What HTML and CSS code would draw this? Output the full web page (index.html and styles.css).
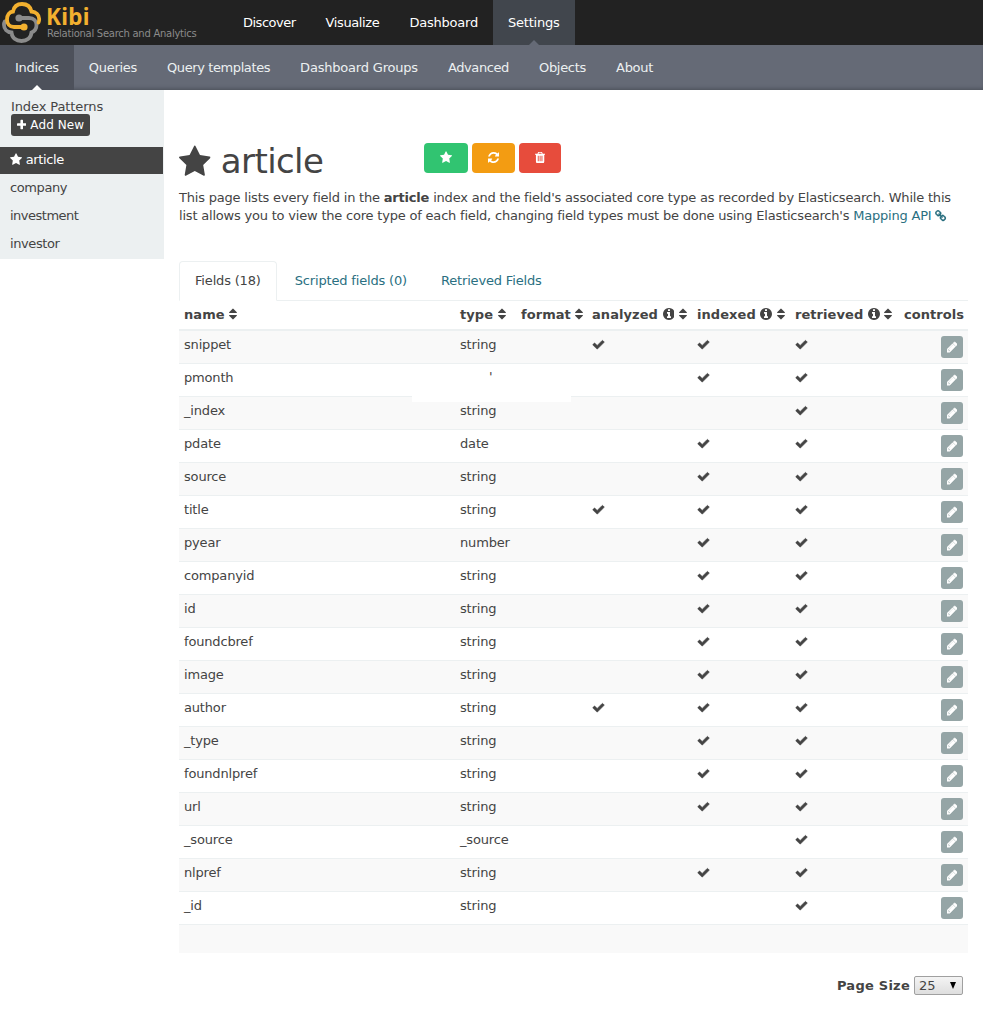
FILE: index.html
```html
<!DOCTYPE html>
<html lang="en">
<head>
<meta charset="utf-8">
<title>Kibi - Settings</title>
<link rel="stylesheet" href="styles.css">
</head>
<body>
<svg class="sprite" aria-hidden="true">
  <symbol id="star" viewBox="64 0 1664 1792"><path d="M1728 647q0 22-26 48l-363 354 86 500q1 7 1 20 0 21-10.5 35.5t-30.5 14.5q-19 0-40-12l-449-236-449 236q-22 12-40 12-21 0-31.5-14.5t-10.5-35.5q0-6 2-20l86-500-364-354q-25-27-25-48 0-37 56-46l502-73 225-455q19-41 49-41t49 41l225 455 502 73q56 9 56 46z"/></symbol>
  <symbol id="refresh" viewBox="128 0 1536 1792"><path d="M1639 1056q0 5-1 7-64 268-268 434.5t-478 166.5q-146 0-282.5-55t-243.5-157l-129 129q-19 19-45 19t-45-19-19-45v-448q0-26 19-45t45-19h448q26 0 45 19t19 45-19 45l-137 137q71 66 161 102t187 36q134 0 250-65t186-179q11-17 53-117 8-23 30-23h192q13 0 22.5 9.5t9.5 22.5zm25-800v448q0 26-19 45t-45 19h-448q-26 0-45-19t-19-45 19-45l138-138q-148-137-349-137-134 0-250 65t-186 179q-11 17-53 117-8 23-30 23h-199q-13 0-22.5-9.5t-9.5-22.5v-7q65-268 270-434.5t480-166.5q146 0 284 55.5t245 156.5l130-129q19-19 45-19t45 19 19 45z"/></symbol>
  <symbol id="trash" viewBox="192 0 1408 1792"><path d="M704 1376v-704q0-14-9-23t-23-9h-64q-14 0-23 9t-9 23v704q0 14 9 23t23 9h64q14 0 23-9t9-23zm256 0v-704q0-14-9-23t-23-9h-64q-14 0-23 9t-9 23v704q0 14 9 23t23 9h64q14 0 23-9t9-23zm256 0v-704q0-14-9-23t-23-9h-64q-14 0-23 9t-9 23v704q0 14 9 23t23 9h64q14 0 23-9t9-23zm-544-992h448l-48-117q-7-9-17-11h-317q-10 2-17 11zm928 32v64q0 14-9 23t-23 9h-96v948q0 83-47 143.5t-113 60.5h-832q-66 0-113-58.5t-47-141.5v-952h-96q-14 0-23-9t-9-23v-64q0-14 9-23t23-9h309l70-167q15-37 54-63t79-26h320q40 0 79 26t54 63l70 167h309q14 0 23 9t9 23z"/></symbol>
  <symbol id="check" viewBox="0 0 1792 1792"><path stroke="currentColor" stroke-width="70" d="M1671 566q0 40-28 68l-724 724-136 136q-28 28-68 28t-68-28l-136-136-362-362q-28-28-28-68t28-68l136-136q28-28 68-28t68 28l294 295 656-657q28-28 68-28t68 28l136 136q28 28 28 68z"/></symbol>
  <symbol id="pencil" viewBox="128 0 1536 1792"><path stroke="currentColor" stroke-width="80" d="M491 1536l91-91-235-235-91 91v107h128v128h107zm523-928q0-22-22-22-10 0-17 7l-542 542q-7 7-7 17 0 22 22 22 10 0 17-7l542-542q7-7 7-17zm-54-192l416 416-832 832h-416v-416zm683 96q0 53-37 90l-166 166-416-416 166-165q36-38 90-38 53 0 91 38l235 234q37 39 37 91z"/></symbol>
  <symbol id="info" viewBox="128 0 1536 1792"><path d="M1152 1376v-160q0-14-9-23t-23-9h-96v-512q0-14-9-23t-23-9h-320q-14 0-23 9t-9 23v160q0 14 9 23t23 9h96v320h-96q-14 0-23 9t-9 23v160q0 14 9 23t23 9h448q14 0 23-9t9-23zm-128-896v-160q0-14-9-23t-23-9h-192q-14 0-23 9t-9 23v160q0 14 9 23t23 9h192q14 0 23-9t9-23zm640 416q0 209-103 385.5t-279.5 279.5-385.5 103-385.5-103-279.5-279.5-103-385.5 103-385.5 279.5-279.5 385.5-103 385.5 103 279.5 279.5 103 385.5z"/></symbol>
  <symbol id="sort" viewBox="384 0 1024 1792"><path d="M1408 1088q0 26-19 45l-448 448q-19 19-45 19t-45-19l-448-448q-19-19-19-45t19-45 45-19h896q26 0 45 19t19 45zm0-384q0 26-19 45t-45 19h-896q-26 0-45-19t-19-45 19-45l448-448q19-19 45-19t45 19l448 448q19 19 19 45z"/></symbol>
  <symbol id="plus" viewBox="192 0 1408 1792"><path d="M1600 736v192q0 40-28 68t-68 28h-416v416q0 40-28 68t-68 28h-192q-40 0-68-28t-28-68v-416h-416q-40 0-68-28t-28-68v-192q0-40 28-68t68-28h416v-416q0-40 28-68t68-28h192q40 0 68 28t28 68v416h416q40 0 68 28t28 68z"/></symbol>
  <symbol id="chain" viewBox="64 0 1664 1792"><path stroke="currentColor" stroke-width="50" d="M1520 1216q0-40-28-68l-208-208q-28-28-68-28-42 0-72 32 3 3 19 18.5t21.5 21.5 15 19 13 25.5 3.5 27.5q0 40-28 68t-68 28q-15 0-27.5-3.5t-25.5-13-19-15-21.5-21.5-18.5-19q-33 31-33 73 0 40 28 68l206 207q27 27 68 27 40 0 68-26l147-146q28-28 28-67zm-703-705q0-40-28-68l-206-207q-28-28-68-28-39 0-68 27l-147 146q-28 28-28 67 0 40 28 68l208 208q27 27 68 27 42 0 72-31-3-3-19-18.5t-21.5-21.5-15-19-13-25.5-3.5-27.5q0-40 28-68t68-28q15 0 27.5 3.5t25.5 13 19 15 21.5 21.5 18.5 19q33-31 33-73zm895 705q0 120-85 203l-147 146q-83 83-203 83-121 0-204-85l-206-207q-83-83-83-203 0-123 88-209l-88-88q-86 88-208 88-120 0-204-84l-208-208q-84-84-84-204t85-203l147-146q83-83 203-83 121 0 204 85l206 207q83 83 83 203 0 123-88 209l88 88q86-88 208-88 120 0 204 84l208 208q84 84 84 204z"/></symbol>
</svg>

<header class="topbar">
  <a class="brand">
    <svg class="brand-mark" viewBox="0 0 44 45" fill="none" stroke-width="3.8" stroke-linecap="round">
      <path stroke="#8b8b8b" d="M19 18H29C34 18 36.500 21 36.500 25C36.500 29 35 31 31.500 32.500C31 38 27 41 21.500 41C16 41 12 38 11.500 32.500C7 32 4 29 4 25C4 23.500 4.200 22.500 4.800 21.500"/>
      <circle cx="19" cy="18" r="3.600" fill="#8b8b8b" stroke="none"/>
      <path stroke="#f2b02f" d="M24 27H14C9.500 27 7 23.500 7 19.500C7 15 9.500 12 13 11.500C14 6.500 17 4 22 4C27 4 30.500 7 31.500 11.500C36 12 39.200 15 39.200 19C39.200 20.500 39 21.500 38.500 22.500"/>
      <circle cx="24" cy="27" r="3.600" fill="#f2b02f" stroke="none"/>
    </svg>
    <span class="brand-text"><b class="brand-name">Kibi</b><span class="brand-tag">Relational Search and Analytics</span></span>
  </a>
  <nav class="nav mainnav">
    <a>Discover</a><a>Visualize</a><a>Dashboard</a><a class="active">Settings</a>
  </nav>
</header>
<nav class="nav subnav">
  <a class="active">Indices</a><a>Queries</a><a>Query templates</a><a>Dashboard Groups</a><a>Advanced</a><a>Objects</a><a>About</a>
</nav>

<div class="layout">
  <aside class="sidebar">
    <div class="side-head">
      <div>Index Patterns</div>
      <a class="add"><svg class="i w-plus"><use href="#plus"/></svg> Add New</a>
    </div>
    <a class="side-item current"><svg class="i w-star"><use href="#star"/></svg> article</a>
    <a class="side-item">company</a>
    <a class="side-item">investment</a>
    <a class="side-item">investor</a>
  </aside>

  <main class="main">
    <div class="title-row">
      <h1 class="title"><svg class="i w-star"><use href="#star"/></svg> article</h1>
      <div class="actions">
        <button class="btn green"><svg class="i w-star"><use href="#star"/></svg></button>
        <button class="btn orange"><svg class="i w-mid"><use href="#refresh"/></svg></button>
        <button class="btn red"><svg class="i w-plus"><use href="#trash"/></svg></button>
      </div>
    </div>
    <p class="intro">This page lists every field in the <b>article</b> index and the field's associated core type as recorded by Elasticsearch. While this list allows you to view the core type of each field, changing field types must be done using Elasticsearch's <a class="link">Mapping API <svg class="i w-star"><use href="#chain"/></svg></a></p>

    <div class="tabs"><a class="tab on">Fields (18)</a><a class="tab">Scripted fields (0)</a><a class="tab">Retrieved Fields</a></div>

    <div class="table-wrap">
      <table class="fields">
        <colgroup><col class="c1"><col class="c2"><col class="c3"><col class="c4"><col class="c5"><col class="c6"><col class="c7"></colgroup>
        <thead><tr>
          <th>name <svg class="i w-sort"><use href="#sort"/></svg></th>
          <th>type <svg class="i w-sort"><use href="#sort"/></svg></th>
          <th>format <svg class="i w-sort"><use href="#sort"/></svg></th>
          <th>analyzed <svg class="i w-mid"><use href="#info"/></svg> <svg class="i w-sort"><use href="#sort"/></svg></th>
          <th>indexed <svg class="i w-mid"><use href="#info"/></svg> <svg class="i w-sort"><use href="#sort"/></svg></th>
          <th>retrieved <svg class="i w-mid"><use href="#info"/></svg> <svg class="i w-sort"><use href="#sort"/></svg></th>
          <th>controls</th>
        </tr></thead>
        <tbody id="rows"></tbody>
      </table>
      <div class="patch">'</div>
    </div>

    <div class="pager"><b>Page Size</b><span class="select">25<span class="caret"></span></span></div>
  </main>
</div>
<script src="fields.js"></script>
</body>
</html>
```

FILE: styles.css
```css
* { box-sizing: border-box; }
body {
  margin: 0;
  background: #fff;
  color: #444;
  font: 13px/18px "DejaVu Sans", sans-serif;
}
.sprite { display: none; }
.i { display: inline-block; height: 1em; fill: currentColor; vertical-align: -0.143em; }
.w-star { width: .929em; }
.w-mid { width: .857em; }
.w-plus { width: .786em; }
.w-sort { width: .571em; }
.w-full { width: 1em; }

.topbar { display: flex; height: 45px; background: #222; }
.brand { display: flex; width: 228px; }
.brand-mark { width: 44px; height: 45px; flex: none; }
.brand-text { display: flex; flex-direction: column; padding: 5px 0 0 2px; }
.brand-name { color: #f2b02f; font: bold 22.500px/23px "Noto Sans", sans-serif; letter-spacing: .3px; }
.brand-tag { padding-left: 1px; color: #8b8b8b; font: 10px/11px "DejaVu Sans", sans-serif; letter-spacing: -.27px; white-space: nowrap; }

.nav { display: flex; }
.nav a { position: relative; padding: 14px 15px 13px; color: #fff; white-space: nowrap; }
.nav a.active { background: #41464d; }
.nav a.active::after {
  content: "";
  position: absolute;
  left: 50%;
  bottom: 0;
  margin-left: -5px;
  border: 5px solid transparent;
  border-top: 0;
  border-bottom-color: #656a76;
}
.mainnav a { letter-spacing: -.38px; }
.mainnav a:nth-child(1) { letter-spacing: -.5px; }
.mainnav a:nth-child(3) { letter-spacing: -.22px; }
.mainnav a:nth-child(4) { letter-spacing: -.2px; }
.subnav { height: 45px; background: #656a76; box-shadow: inset 0 -3px 4px -2px #4a4e58; }
.subnav a { color: #ecf0f1; letter-spacing: -.29px; }
.subnav a:nth-child(3), .subnav a:nth-child(5) { letter-spacing: -.4px; }
.subnav a:nth-child(4) { letter-spacing: -.2px; }
.subnav a.active { background: #4d515b; }
.subnav a.active::after { border-bottom-color: #fff; }

.layout { display: flex; align-items: flex-start; }
.sidebar { width: 164px; padding-bottom: 1px; background: #ecf0f1; flex: none; }
.side-head { height: 57px; padding: 8px 11px 0; letter-spacing: -.1px; }
.add {
  display: block;
  width: 79px;
  height: 22px;
  margin-top: -2px;
  padding: 2px 6px;
  border-radius: 3px;
  background: #444;
  color: #fff;
  font-size: 12px;
  letter-spacing: .1px;
  white-space: nowrap;
}
.side-item { display: block; height: 28px; padding: 5px 10px; letter-spacing: -.4px; }
.side-item:nth-child(4) { letter-spacing: -.5px; }
.side-item.current { width: 163px; height: 27px; padding-top: 4px; color: #fff; background: #444; }

.main { flex: none; width: 789px; margin-left: 15px; padding-top: 50px; }
.title-row { display: flex; height: 49px; }
.title { width: 245px; margin: 0; font-weight: normal; font-size: 34px; line-height: 42px; letter-spacing: -.6px; }
.title .i { vertical-align: -.165em; }
.actions { display: flex; gap: 4px; padding-top: 3px; }
.btn { height: 30px; padding: 0; border: 0; border-radius: 4px; color: #fff; font-size: 13px; line-height: 28px; }
.green { width: 44px; background: #31c471; }
.orange { width: 43px; background: #f39c12; }
.red { width: 42px; background: #e74c3c; }
.intro { margin: 0; height: 72px; letter-spacing: -.2px; }
.link, .tab { color: #2a6f81; }
.link .i { font-size: 12px; }

.tabs { display: flex; gap: 2px; height: 40px; border-bottom: 1px solid #ecf0f1; }
.tab { height: 40px; padding: 10px 15px; border: 1px solid transparent; letter-spacing: -.17px; }
.tab.on { color: #444; border-color: #ecf0f1 #ecf0f1 #fff; border-radius: 4px 4px 0 0; background: #fff; }

.table-wrap { position: relative; }
.fields { width: 789px; table-layout: fixed; border-collapse: separate; border-spacing: 0; }
.c1 { width: 276px; } .c2 { width: 61px; } .c3 { width: 71px; } .c4 { width: 105px; }
.c5 { width: 98px; } .c6 { width: 109px; } .c7 { width: 69px; }
.fields th { height: 30px; padding: 0 5px 1px; border-bottom: 2px solid #ecf0f1; text-align: left; white-space: nowrap; letter-spacing: .06px; }
.fields th .i { font-size: 14px; vertical-align: -.18em; }
.fields td { height: 33px; padding: 5px 5px 0; border-top: 1px solid #ecf0f1; vertical-align: top; letter-spacing: -.17px; }
.fields tr:first-child td { height: 32px; border-top: 0; }
.fields tr:nth-child(odd) td { background: #f9f9f9; }
.fields tr.empty td { height: 29px; }
.fields .ctl { text-align: right; }
.edit {
  display: block;
  width: 22px;
  height: 22px;
  margin-left: auto;
  border-radius: 3px;
  background: #95a5a6;
  color: #fff;
  font-size: 12px;
  line-height: 22px;
  text-align: center;
}
.patch { position: absolute; left: 233px; top: 66px; width: 159px; height: 35px; padding: 1px 0 0 77px; background: #fff; }

.pager { display: flex; justify-content: flex-end; align-items: center; gap: 4px; padding: 23px 5px 0 0; }
.pager b { letter-spacing: .25px; }
.select {
  display: flex;
  justify-content: space-between;
  align-items: center;
  width: 49px;
  height: 19px;
  padding: 0 6px 0 4px;
  border: 1px solid #a0a0a0;
  border-radius: 2px;
  background: linear-gradient(#f4f4f4, #dedede);
}
.caret { border: 3.5px solid transparent; border-top: 7px solid #000; border-bottom: 0; }
```

FILE: fields.js
```js
// name, type, analyzed, indexed (every field is retrieved)
const fields = [
  ["snippet", "string", 1, 1], ["pmonth", "", 0, 1], ["_index", "string", 0, 0],
  ["pdate", "date", 0, 1], ["source", "string", 0, 1], ["title", "string", 1, 1],
  ["pyear", "number", 0, 1], ["companyid", "string", 0, 1], ["id", "string", 0, 1],
  ["foundcbref", "string", 0, 1], ["image", "string", 0, 1], ["author", "string", 1, 1],
  ["_type", "string", 0, 1], ["foundnlpref", "string", 0, 1], ["url", "string", 0, 1],
  ["_source", "_source", 0, 0], ["nlpref", "string", 0, 1], ["_id", "string", 0, 0]
];
const tick = on => on ? '<svg class="i w-full"><use href="#check"/></svg>' : "";
document.getElementById("rows").innerHTML = fields.map(([name, type, analyzed, indexed]) =>
  `<tr><td>${name}</td><td>${type}</td><td></td><td>${tick(analyzed)}</td><td>${tick(indexed)}</td><td>${tick(1)}</td>` +
  `<td class="ctl"><a class="edit"><svg class="i w-mid"><use href="#pencil"/></svg></a></td></tr>`
).join("") + '<tr class="empty"><td colspan="7"></td></tr>';
```
